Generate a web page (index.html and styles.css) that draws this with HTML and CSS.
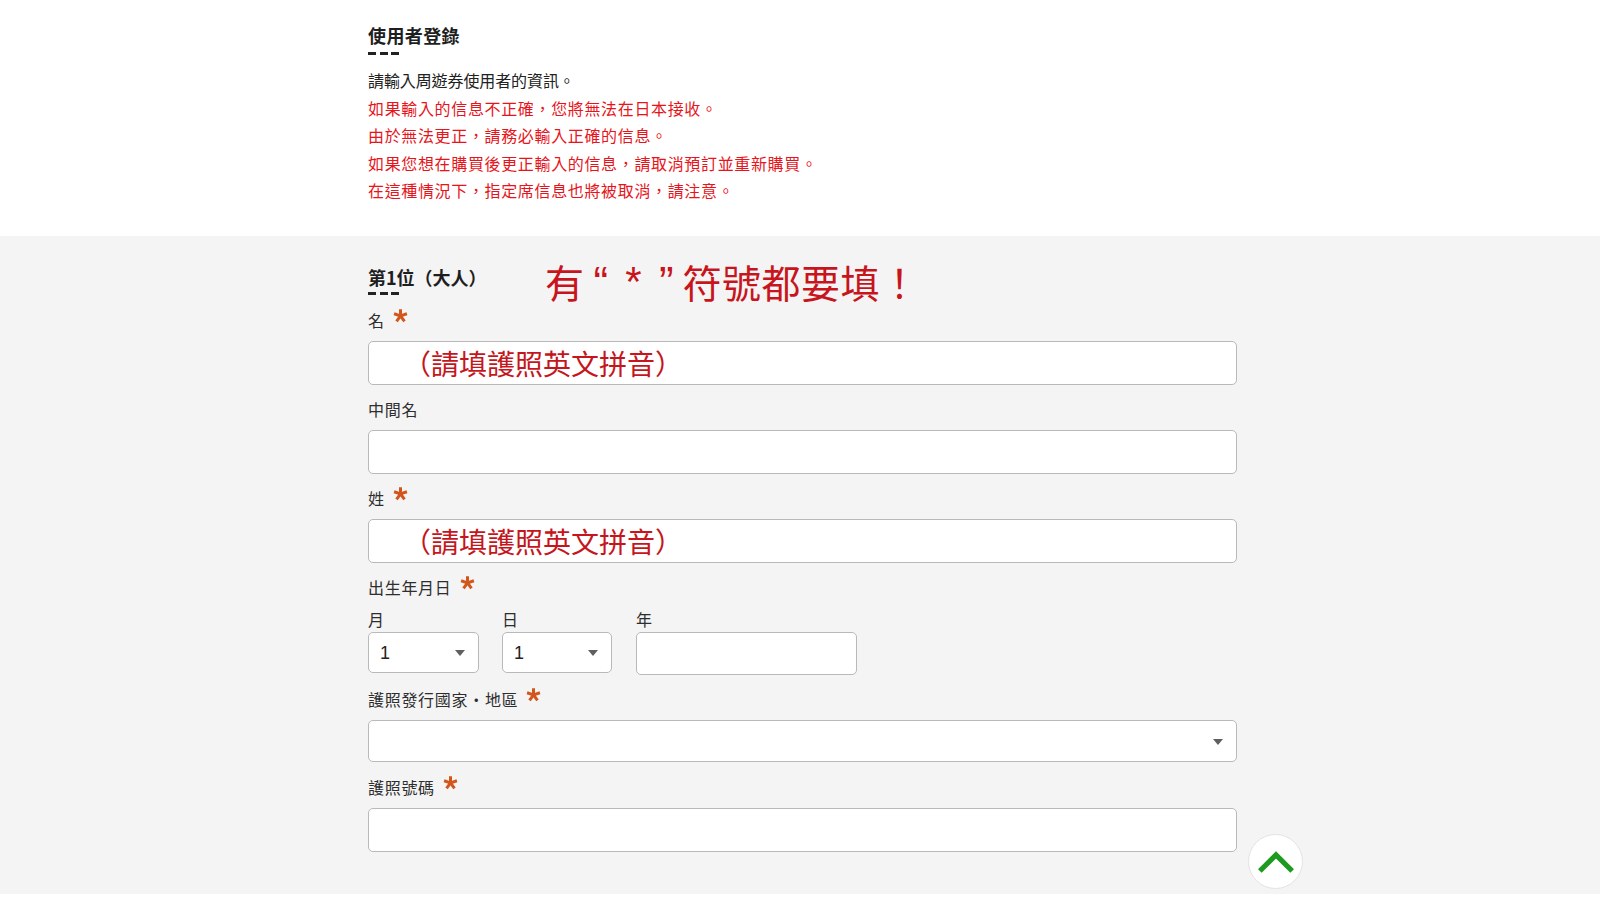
FILE: index.html
```html
<!DOCTYPE html>
<html lang="zh-Hant">
<head>
<meta charset="utf-8">
<title>使用者登錄</title>
<link rel="stylesheet" href="styles.css">
</head>
<body>
<section class="intro">
  <div class="wrap">
    <h2 class="title">使用者登錄</h2>
    <div class="lines">
      <p class="lead">請輸入周遊券使用者的資訊。</p>
      <p class="warn">如果輸入的信息不正確，您將無法在日本接收。</p>
      <p class="warn">由於無法更正，請務必輸入正確的信息。</p>
      <p class="warn">如果您想在購買後更正輸入的信息，請取消預訂並重新購買。</p>
      <p class="warn">在這種情況下，指定席信息也將被取消，請注意。</p>
    </div>
  </div>
</section>

<section class="form">
  <div class="wrap">
    <div class="person">
      <h3 class="title sub">第1位（大人）</h3>
      <p class="note">有<span class="mark">“</span><span class="mark star">*</span><span class="mark">”</span>符號都要填！</p>
    </div>

    <div class="field">
      <label class="label">名<svg class="req" viewBox="0 0 20 20"><path d="M10 10.5V1.5M10 10.5L18.6 7.7M10 10.5L15.3 17.8M10 10.5L4.7 17.8M10 10.5L1.4 7.7"/></svg></label>
      <input class="input" type="text" placeholder="（請填護照英文拼音）">
    </div>

    <div class="field">
      <label class="label">中間名</label>
      <input class="input" type="text">
    </div>

    <div class="field">
      <label class="label">姓<svg class="req" viewBox="0 0 20 20"><path d="M10 10.5V1.5M10 10.5L18.6 7.7M10 10.5L15.3 17.8M10 10.5L4.7 17.8M10 10.5L1.4 7.7"/></svg></label>
      <input class="input" type="text" placeholder="（請填護照英文拼音）">
    </div>

    <div class="field date">
      <label class="label">出生年月日<svg class="req" viewBox="0 0 20 20"><path d="M10 10.5V1.5M10 10.5L18.6 7.7M10 10.5L15.3 17.8M10 10.5L4.7 17.8M10 10.5L1.4 7.7"/></svg></label>
      <div class="date-row">
        <div class="date-col month">
          <span class="sublabel">月</span>
          <div class="select small"><span class="select-value">1</span></div>
        </div>
        <div class="date-col day">
          <span class="sublabel">日</span>
          <div class="select small"><span class="select-value">1</span></div>
        </div>
        <div class="date-col year">
          <span class="sublabel">年</span>
          <input class="input short" type="text">
        </div>
      </div>
    </div>

    <div class="field">
      <label class="label">護照發行國家・地區<svg class="req" viewBox="0 0 20 20"><path d="M10 10.5V1.5M10 10.5L18.6 7.7M10 10.5L15.3 17.8M10 10.5L4.7 17.8M10 10.5L1.4 7.7"/></svg></label>
      <div class="select wide"><span class="select-value"></span></div>
    </div>

    <div class="field last">
      <label class="label">護照號碼<svg class="req" viewBox="0 0 20 20"><path d="M10 10.5V1.5M10 10.5L18.6 7.7M10 10.5L15.3 17.8M10 10.5L4.7 17.8M10 10.5L1.4 7.7"/></svg></label>
      <input class="input" type="text">
    </div>
  </div>
</section>

<a class="totop" href="#" aria-label="top">
  <svg viewBox="0 0 40 26"><polyline points="3,23 20,6 37,23"/></svg>
</a>
</body>
</html>
```

FILE: styles.css
```css
* { box-sizing: border-box; }

html, body {
  margin: 0;
  padding: 0;
  background: #ffffff;
}

body {
  font-family: "Noto Sans CJK TC", "Noto Sans CJK JP", "Noto Sans", sans-serif;
  color: #333333;
  font-size: 16px;
}

.wrap {
  width: 869px;
  margin-left: calc(50% - 432px);
}

.intro {
  padding: 23px 0 31px;
}

.title {
  margin: 0;
  font-size: 18px;
  line-height: 24px;
  font-weight: 700;
  color: #1e1e1e;
  letter-spacing: 0.4px;
}

.title::after {
  content: "";
  display: block;
  width: 31px;
  height: 3px;
  margin-top: 5px;
  background: repeating-linear-gradient(90deg, #222 0 8px, transparent 8px 11.5px);
}

.lines {
  margin-top: 12px;
}

.lines p {
  margin: 0;
  line-height: 27.6px;
  font-size: 16px;
}

.lead {
  color: #222222;
  letter-spacing: -0.1px;
}

.warn {
  color: #e8141b;
  letter-spacing: 0.65px;
}

.form {
  background: #f4f4f4;
  padding: 31px 0 42px;
}

.person {
  position: relative;
}

.title.sub {
  font-size: 18px;
  line-height: 20px;
  letter-spacing: 0;
}

.note {
  position: absolute;
  left: 177px;
  top: -5px;
  margin: 0;
  font-size: 39px;
  line-height: 39px;
  color: #c8141c;
  white-space: nowrap;
  letter-spacing: 0.5px;
}

.mark {
  display: inline-block;
  width: 32.7px;
  text-align: center;
  font-size: 44px;
  font-family: "Liberation Sans", sans-serif;
  letter-spacing: 0;
}

.mark.star {
  font-size: 42px;
  vertical-align: top;
}

.field {
  margin-top: 16px;
}

.person + .field {
  margin-top: 17px;
}

.field.last {
  margin-top: 17px;
}

.label {
  display: flex;
  align-items: flex-start;
  gap: 8px;
  margin-top: -2px;
  font-size: 16px;
  line-height: 20px;
  color: #2e2e2e;
  letter-spacing: 0.7px;
}

.req {
  width: 15px;
  height: 15px;
  margin-top: -2px;
  fill: none;
  stroke: #d2561c;
  stroke-width: 4;
}

.input {
  display: block;
  width: 100%;
  height: 44px;
  margin-top: 11px;
  background: #ffffff;
  border: 1px solid #b9b9b9;
  border-radius: 5px;
  padding: 0 12px 0 34px;
  font-family: inherit;
  font-size: 28px;
  color: #c8141c;
}

.input::placeholder {
  color: #c4161c;
  opacity: 1;
}

.date .label {
  margin-bottom: 12px;
}

.date {
  margin-bottom: 2px;
}

.date-row {
  display: flex;
  gap: 23px;
}

.date-col {
  display: flex;
  flex-direction: column;
}

.month { width: 111px; }
.day { width: 110px; }
.year { width: 221px; margin-left: 1px; }

.sublabel {
  font-size: 16px;
  line-height: 20px;
  color: #2e2e2e;
}

.select {
  position: relative;
  height: 41px;
  background: #ffffff;
  border: 1px solid #b9b9b9;
  border-radius: 5px;
  display: flex;
  align-items: center;
  padding-left: 11px;
}

.select.small {
  margin-top: 3px;
  padding-top: 3px;
}

.select.wide {
  margin-top: 11px;
  width: 100%;
  height: 42px;
}

.select::after {
  content: "";
  position: absolute;
  right: 13px;
  top: 50%;
  margin-top: -2px;
  border-left: 5.5px solid transparent;
  border-right: 5.5px solid transparent;
  border-top: 6px solid #5f5f5f;
}

.select-value {
  font-family: "Liberation Sans", "Noto Sans", sans-serif;
  font-size: 18px;
  color: #222;
}

.input.short {
  height: 43px;
  margin-top: 3px;
  padding-left: 10px;
}

.totop {
  position: fixed;
  right: 297px;
  bottom: 24px;
  width: 55px;
  height: 55px;
  border-radius: 50%;
  background: #ffffff;
  border: 1px solid #e2e2e2;
  display: flex;
  align-items: center;
  justify-content: center;
}

.totop svg {
  width: 38px;
  height: 25px;
  margin-top: -1px;
  fill: none;
  stroke: #1d9a1f;
  stroke-width: 5.5;
}
```
